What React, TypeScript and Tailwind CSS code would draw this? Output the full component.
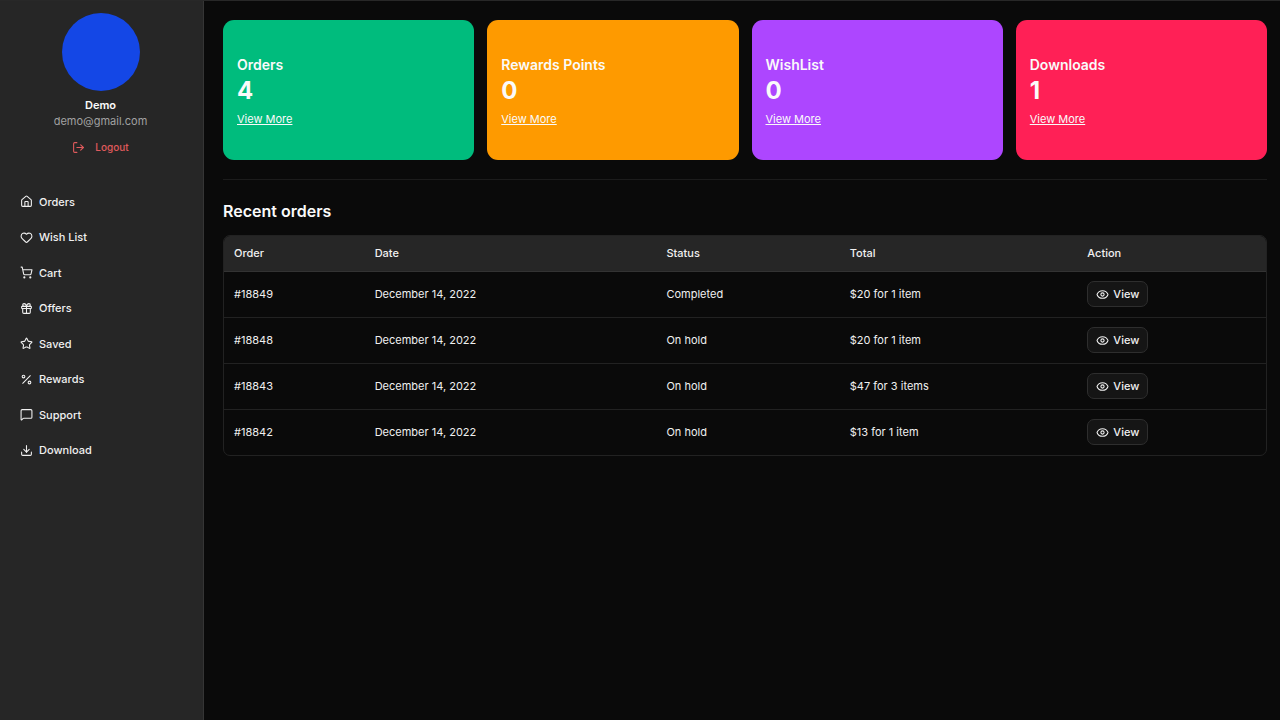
import type { ComponentType } from "react";
import {
  Download,
  Eye,
  Gift,
  Heart,
  House,
  LogOut,
  MessageSquare,
  Percent,
  ShoppingCart,
  Star,
} from "lucide-react";

type IconType = ComponentType<{ size?: number; className?: string }>;

const links: { label: string; icon: IconType }[] = [
  { label: "Orders", icon: House },
  { label: "Wish List", icon: Heart },
  { label: "Cart", icon: ShoppingCart },
  { label: "Offers", icon: Gift },
  { label: "Saved", icon: Star },
  { label: "Rewards", icon: Percent },
  { label: "Support", icon: MessageSquare },
  { label: "Download", icon: Download },
];

const stats = [
  { title: "Orders", value: 4, color: "bg-[#00bc7d]" },
  { title: "Rewards Points", value: 0, color: "bg-[#fe9a00]" },
  { title: "WishList", value: 0, color: "bg-[#ad46ff]" },
  { title: "Downloads", value: 1, color: "bg-[#ff2056]" },
];

const orders = [
  { id: "#18849", date: "December 14, 2022", status: "Completed", total: "$20 for 1 item" },
  { id: "#18848", date: "December 14, 2022", status: "On hold", total: "$20 for 1 item" },
  { id: "#18843", date: "December 14, 2022", status: "On hold", total: "$47 for 3 items" },
  { id: "#18842", date: "December 14, 2022", status: "On hold", total: "$13 for 1 item" },
];

function Sidebar() {
  return (
    <aside className="w-51 shrink-0 border-r border-[#353535] bg-[#262626]">
      <div className="flex flex-col items-center pt-3 pr-0.5">
        <div className="size-[78px] rounded-full bg-[#1447e6]" />
        <p className="mt-1.5 text-[11px] leading-4 font-semibold">Demo</p>
        <p className="text-[11px] leading-4 text-[#a1a1a1]">demo@gmail.com</p>
        <button
          type="button"
          className="mt-1 flex h-7 items-center gap-2.5 text-[10px] font-medium text-[#e05a5c]"
        >
          <LogOut size={13} />
          Logout
        </button>
      </div>
      <nav className="mt-[23px] grid h-71 auto-rows-fr pl-5">
        {links.map(({ label, icon: Icon }) => (
          <a
            key={label}
            href="#"
            className="flex items-center gap-1.5 text-[11px] font-medium text-[#f0f0f0]"
          >
            <Icon size={13} />
            {label}
          </a>
        ))}
      </nav>
    </aside>
  );
}

function StatCard({ title, value, color }: (typeof stats)[number]) {
  return (
    <section className={`flex h-35 flex-col items-start justify-center rounded-[11px] px-3.5 pt-0.5 ${color}`}>
      <h2 className="text-[14px] leading-6 font-semibold">{title}</h2>
      <p className="text-[24px] leading-7 font-bold">{value}</p>
      <a href="#" className="mt-1 text-[11px] leading-5 underline">
        View More
      </a>
    </section>
  );
}

function OrdersTable() {
  return (
    <div className="overflow-hidden rounded-[7px] border border-[#222222]">
      <table className="w-full table-fixed text-left text-[11px] text-[#f0f0f0]">
        <colgroup>
          <col className="w-[13.5%]" />
          <col className="w-[28%]" />
          <col className="w-[17.6%]" />
          <col className="w-[22.8%]" />
          <col />
        </colgroup>
        <thead>
          <tr className="h-[35px] border-b border-[#333333] bg-[#262626]">
            {["Order", "Date", "Status", "Total", "Action"].map((name) => (
              <th key={name} className="px-2.5 font-medium">
                {name}
              </th>
            ))}
          </tr>
        </thead>
        <tbody>
          {orders.map((order) => (
            <tr key={order.id} className="h-[46px] border-b border-[#222222] last:border-b-0">
              <td className="px-2.5">{order.id}</td>
              <td className="px-2.5">{order.date}</td>
              <td className="px-2.5">{order.status}</td>
              <td className="px-2.5">{order.total}</td>
              <td className="px-2.5">
                <button
                  type="button"
                  className="flex h-[26px] items-center gap-1 rounded-[7px] border border-[#2e2e2e] bg-[#151515] px-2 font-medium"
                >
                  <Eye size={13} />
                  View
                </button>
              </td>
            </tr>
          ))}
        </tbody>
      </table>
    </div>
  );
}

export default function App() {
  return (
    <div className="flex min-h-screen border-t border-[#282828] bg-[#0a0a0a] font-['Inter',sans-serif] text-[#fafafa]">
      <Sidebar />
      <main className="min-w-0 flex-1 pt-[19px] pr-[13px] pl-[19px]">
        <div className="grid grid-cols-4 gap-[13px]">
          {stats.map((stat) => (
            <StatCard key={stat.title} {...stat} />
          ))}
        </div>
        <hr className="mt-[19px] border-[#1c1c1c]" />
        <h1 className="mt-[19px] mb-3 text-[16px] leading-6 font-semibold">Recent orders</h1>
        <OrdersTable />
      </main>
    </div>
  );
}
